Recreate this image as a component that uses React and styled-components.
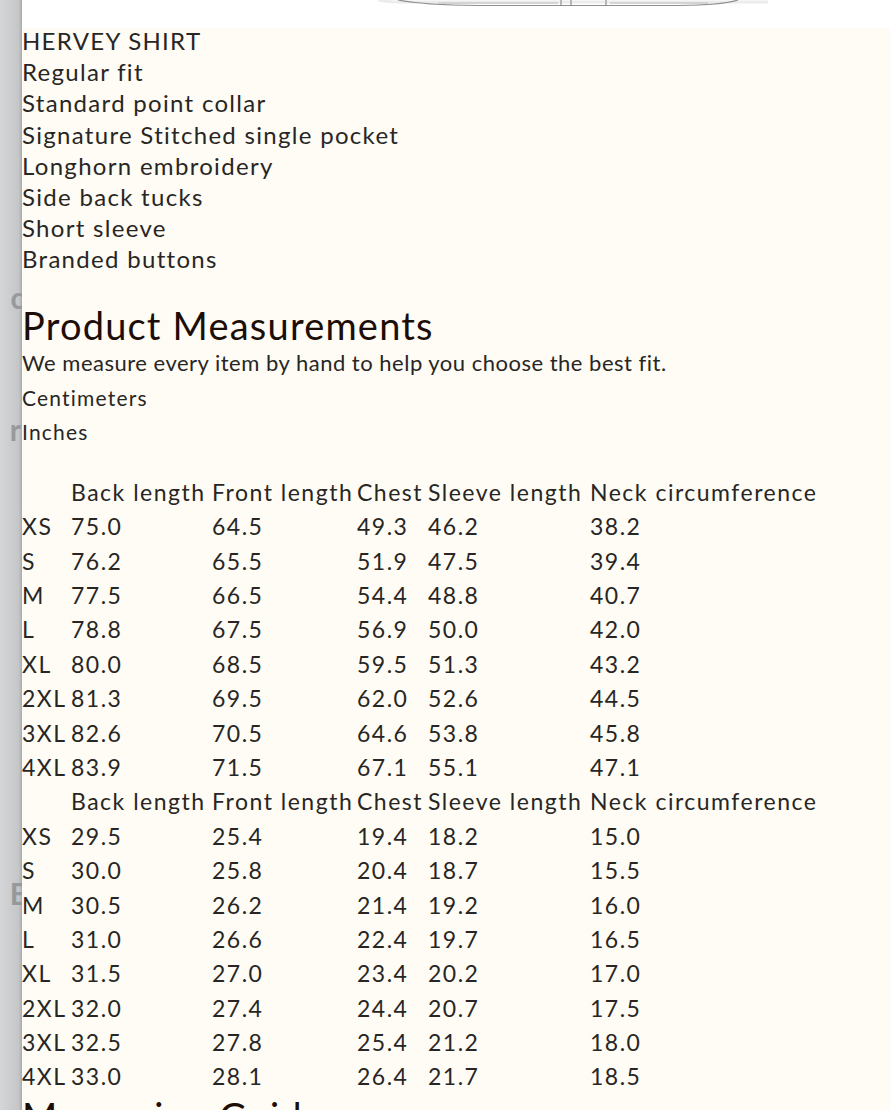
import styled, { createGlobalStyle } from "styled-components";

const GlobalStyle = createGlobalStyle`
	html, body {
		margin: 0;
		padding: 0;
		background: #fefcf5;
	}
	body {
		font-family: "Lato", "Liberation Sans", sans-serif;
		color: #282624;
	}
`;

const Page = styled.div`
	display: flex;
	width: 890px;
	height: 1110px;
	overflow: hidden;
`;

const Backdrop = styled.div`
	flex: 0 0 22px;
	display: flex;
	flex-direction: column;
	align-items: flex-end;
	overflow: hidden;
	background: linear-gradient(to right, #d4d6d8, #c4c6c8 85%, #a9abad);
	color: #97999b;
	font-weight: 700;
	font-size: 30px;
	line-height: 1;
`;

const Ghost = styled.span`
	margin-top: ${(p) => p.top}px;
	margin-right: ${(p) => -p.cut}px;
`;

const Panel = styled.div`
	flex: 1;
	display: flex;
	flex-direction: column;
	align-items: flex-start;
	background: #fefcf5;
`;

const ImageStrip = styled.div`
	align-self: stretch;
	height: 28px;
	padding-left: 356px;
	background: #fff;
`;

const Features = styled.ul`
	list-style: none;
	margin: -3px 0 0;
	padding: 0;
	font-size: 24px;
	line-height: 31.2px;
	letter-spacing: 1.3px;
`;

const Heading = styled.h2`
	margin: ${(p) => (p.$flush ? 0 : 28)}px 0 0;
	font-size: 38px;
	font-weight: 400;
	line-height: 44px;
	letter-spacing: 1.2px;
	color: #1c0e07;
`;

const Note = styled.p`
	margin: 0;
	font-size: 22px;
	line-height: 32px;
	letter-spacing: 0.5px;
`;

const Units = styled.div`
	display: flex;
	flex-direction: column;
	margin-top: 2px;
	margin-bottom: 26px;
	font-size: 21px;
	line-height: 34px;
	letter-spacing: 1.2px;
`;

const Table = styled.table`
	border-collapse: collapse;
	table-layout: fixed;
	font-size: 23px;
	letter-spacing: 1.5px;
`;

const Col = styled.col`
	width: ${(p) => p.$w}px;
`;

const Cell = styled.td`
	padding: 0;
	height: 34.4px;
	text-align: left;
	font-weight: 400;
	white-space: nowrap;
	vertical-align: middle;
`;

const Head = styled(Cell).attrs({ as: "th" })``;

const headers = ["Back length", "Front length", "Chest", "Sleeve length", "Neck circumference"];
const widths = [49, 141, 145, 71, 162, 240];

const cm = [
	["XS", "75.0", "64.5", "49.3", "46.2", "38.2"],
	["S", "76.2", "65.5", "51.9", "47.5", "39.4"],
	["M", "77.5", "66.5", "54.4", "48.8", "40.7"],
	["L", "78.8", "67.5", "56.9", "50.0", "42.0"],
	["XL", "80.0", "68.5", "59.5", "51.3", "43.2"],
	["2XL", "81.3", "69.5", "62.0", "52.6", "44.5"],
	["3XL", "82.6", "70.5", "64.6", "53.8", "45.8"],
	["4XL", "83.9", "71.5", "67.1", "55.1", "47.1"],
];

const inches = [
	["XS", "29.5", "25.4", "19.4", "18.2", "15.0"],
	["S", "30.0", "25.8", "20.4", "18.7", "15.5"],
	["M", "30.5", "26.2", "21.4", "19.2", "16.0"],
	["L", "31.0", "26.6", "22.4", "19.7", "16.5"],
	["XL", "31.5", "27.0", "23.4", "20.2", "17.0"],
	["2XL", "32.0", "27.4", "24.4", "20.7", "17.5"],
	["3XL", "32.5", "27.8", "25.4", "21.2", "18.0"],
	["4XL", "33.0", "28.1", "26.4", "21.7", "18.5"],
];

function SizeTable({ rows }) {
	return (
		<Table>
			<colgroup>
				{widths.map((w, i) => (
					<Col key={i} $w={w} />
				))}
			</colgroup>
			<thead>
				<tr>
					<Head />
					{headers.map((h) => (
						<Head key={h}>{h}</Head>
					))}
				</tr>
			</thead>
			<tbody>
				{rows.map((r) => (
					<tr key={r[0]}>
						{r.map((v, i) => (
							<Cell key={i}>{v}</Cell>
						))}
					</tr>
				))}
			</tbody>
		</Table>
	);
}

// bottom hem of the product photo that sits above the description
function ShirtHem() {
	return (
		<svg width="400" height="28" viewBox="0 0 400 28">
			<path d="M0 0 Q10 2 20 2 L390 2" stroke="#ececec" strokeWidth="3" fill="none" />
			<path d="M20 0 Q45 5 100 5.5 L300 5.5 Q345 5 360 0" fill="none" stroke="#8f8f8f" strokeWidth="1.2" />
			<path d="M183 0 V5.5 M228 0 V5.5 M193 0 V5.5" fill="none" stroke="#7f7f7f" strokeWidth="1" />
			<path d="M60 3 H180 M232 3 H330" stroke="#d4d4d4" strokeWidth="2" />
		</svg>
	);
}

export default function App() {
	return (
		<Page>
			<GlobalStyle />
			<Backdrop>
				<Ghost top={282} cut={3}>c</Ghost>
				<Ghost top={102} cut={-1}>r</Ghost>
				<Ghost top={434} cut={5}>E</Ghost>
			</Backdrop>
			<Panel>
				<ImageStrip>
					<ShirtHem />
				</ImageStrip>
				<Features>
					<li>HERVEY SHIRT</li>
					<li>Regular fit</li>
					<li>Standard point collar</li>
					<li>Signature Stitched single pocket</li>
					<li>Longhorn embroidery</li>
					<li>Side back tucks</li>
					<li>Short sleeve</li>
					<li>Branded buttons</li>
				</Features>
				<Heading>Product Measurements</Heading>
				<Note>We measure every item by hand to help you choose the best fit.</Note>
				<Units>
					<span>Centimeters</span>
					<span>Inches</span>
				</Units>
				<SizeTable rows={cm} />
				<SizeTable rows={inches} />
				<Heading $flush>Measuring Guide</Heading>
			</Panel>
		</Page>
	);
}
